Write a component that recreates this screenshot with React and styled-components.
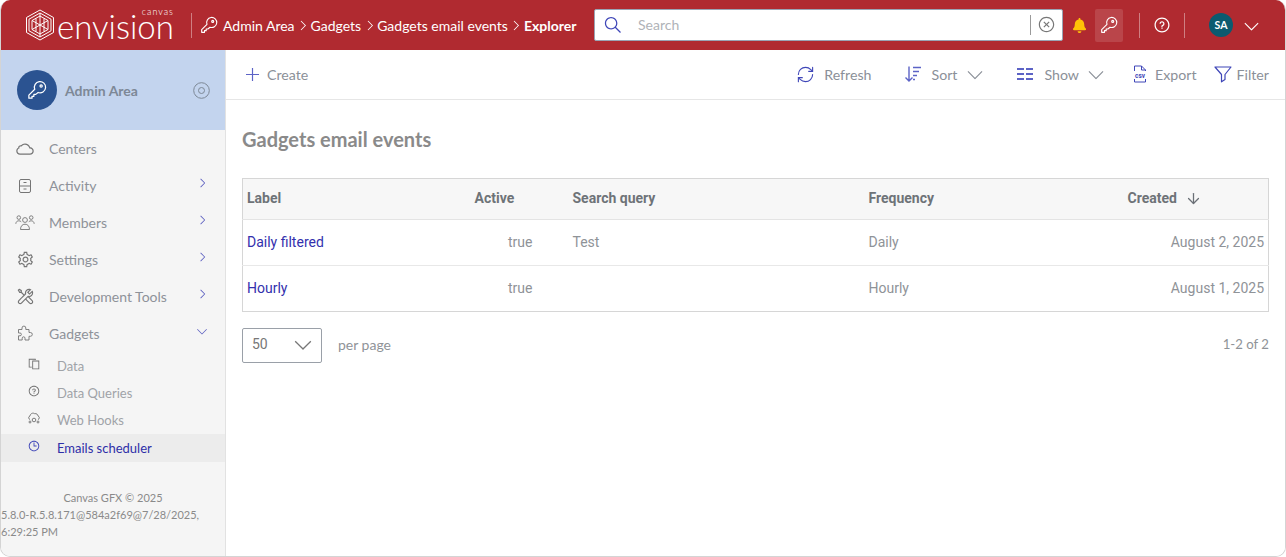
import React from "react";
import styled, { createGlobalStyle } from "styled-components";
import { RefreshCw, ArrowDown } from "lucide-react";
import {
  LiaCloudSolid,
  LiaCogSolid,
  LiaToolsSolid,
  LiaCopySolid,
  LiaQuestionCircleSolid,
  LiaClockSolid,
  LiaSearchSolid,
  LiaTimesCircleSolid,
  LiaPlusSolid,
  LiaAngleDownSolid,
  LiaAngleRightSolid,
} from "react-icons/lia";
import { FaBell } from "react-icons/fa";

const GlobalStyle = createGlobalStyle`
  html, body { margin: 0; padding: 0; background: #fff; }
  body { font-family: "Lato", "Liberation Sans", sans-serif; }
  * { box-sizing: border-box; }
`;

const Shell = styled.div`
  width: 1286px;
  height: 557px;
  display: flex;
  flex-direction: column;
  overflow: hidden;
  border-radius: 10px;
  border: 1px solid #d4d4d4;
  border-top: 0;
`;

const Header = styled.header`
  height: 50px;
  flex: none;
  margin: 0 -1px;
  background: #b02a30;
  display: flex;
  align-items: center;
  padding-left: 25px;
  color: #fff;
`;

const Logo = styled.div`
  display: flex;
  align-items: center;
  width: 166px;
  flex: none;
`;

const LogoWords = styled.div`
  position: relative;
  margin-left: 2px;
  margin-top: 1px;
  font-size: 33px;
  font-weight: 300;
  line-height: 34px;
`;

const LogoSmall = styled.span`
  position: absolute;
  right: 0;
  top: -2px;
  font-size: 9px;
  letter-spacing: 1px;
  line-height: 10px;
`;

const HeadDivider = styled.span`
  width: 1px;
  height: 25px;
  flex: none;
  background: rgba(255, 255, 255, 0.4);
  margin: ${(p) => p.$margin || "0"};
`;

const Crumbs = styled.nav`
  display: flex;
  align-items: center;
  font-size: 14px;
  width: 402px;
  flex: none;
  padding-left: 8px;
  white-space: nowrap;
  svg { flex: none; }
`;

const Crumb = styled.span`
  font-weight: ${(p) => (p.$current ? 700 : 400)};
  margin-left: ${(p) => p.$ml || 0}px;
`;

const CrumbArrow = styled.span`
  display: flex;
  margin: 0 1.5px;
`;

const SearchBox = styled.div`
  width: 469px;
  height: 32px;
  margin-bottom: 1px;
  flex: none;
  background: #fff;
  border: 1px solid #9aa4b4;
  border-radius: 2px;
  display: flex;
  align-items: center;
  padding: 0 6px 0 8px;
  color: #3f46b8;
`;

const SearchGlyph = styled.span`
  display: flex;
  transform: scaleX(-1);
`;

const SearchText = styled.span`
  flex: 1;
  margin-left: 15px;
  color: #b0b3b8;
  font-size: 14px;
`;

const SearchSep = styled.span`
  width: 1px;
  height: 20px;
  background: #9a9a9a;
  margin-right: 6px;
`;

const HeadIcon = styled.span`
  display: flex;
  align-items: center;
  justify-content: center;
  flex: none;
  width: ${(p) => p.$w}px;
  height: 33px;
  margin-left: ${(p) => p.$ml || 0}px;
  border-radius: 2px;
  color: ${(p) => p.$color || "#fff"};
  background: ${(p) => (p.$active ? "rgba(255,255,255,0.13)" : "transparent")};
`;

const Avatar = styled.span`
  width: 24px;
  height: 24px;
  flex: none;
  margin-left: 24px;
  border-radius: 50%;
  background: #0b5a6f;
  color: #fff;
  font-size: 10.5px;
  font-weight: 700;
  display: flex;
  align-items: center;
  justify-content: center;
`;

const Body = styled.div`
  flex: 1;
  display: flex;
  min-height: 0;
`;

const Sidebar = styled.aside`
  width: 225px;
  flex: none;
  background: #f5f5f5;
  border-right: 1px solid #e2e2e2;
  display: flex;
  flex-direction: column;
`;

const AdminBlock = styled.div`
  height: 80px;
  flex: none;
  background: #c3d4ee;
  display: flex;
  align-items: center;
  padding: 0 15px 0 16px;
`;

const AdminCircle = styled.span`
  width: 40px;
  height: 40px;
  border-radius: 50%;
  background: #2b5391;
  color: #fff;
  display: flex;
  align-items: center;
  justify-content: center;
`;

const AdminName = styled.span`
  flex: 1;
  margin-left: 8px;
  font-size: 14px;
  font-weight: 700;
  color: #7d8896;
`;

const NavList = styled.nav`
  display: flex;
  flex-direction: column;
`;

const NavRow = styled.div`
  height: 37px;
  flex: none;
  display: flex;
  align-items: center;
  padding-left: 14px;
  color: #757575;
`;

const NavIcon = styled.span`
  width: 20px;
  display: flex;
  justify-content: center;
  flex: none;
`;

const NavLabel = styled.span`
  flex: 1;
  margin-left: 14px;
  font-size: 14px;
  color: #8e9299;
`;

const NavCaret = styled.span`
  display: flex;
  width: 14px;
  margin-right: 15px;
  margin-top: -6px;
  color: #5c5fc0;
`;

const SubRow = styled.div`
  height: 27.4px;
  flex: none;
  display: flex;
  align-items: center;
  padding-left: 25px;
  font-size: 13px;
  color: ${(p) => (p.$active ? "#3f46b8" : "#6f6f6f")};
  background: ${(p) => (p.$active ? "#ececec" : "transparent")};
`;

const SubIcon = styled.span`
  width: 16px;
  display: flex;
  justify-content: center;
  flex: none;
  margin-top: -4px;
`;

const SubLabel = styled.span`
  margin-left: 15px;
  color: ${(p) => (p.$active ? "#2e2fa8" : "#a0a3a8")};
`;

const Footer = styled.footer`
  margin-top: 27px;
  font-size: 11px;
  line-height: 17px;
  color: #8a8a8a;
`;

const FooterCentered = styled.div`
  text-align: center;
`;

const Main = styled.main`
  flex: 1;
  display: flex;
  flex-direction: column;
  min-width: 0;
  background: #fff;
`;

const Toolbar = styled.div`
  height: 50px;
  flex: none;
  border-bottom: 1px solid #e6e6e6;
  display: flex;
  align-items: center;
  padding: 0 16px 1px 17px;
`;

const ToolButton = styled.span`
  display: flex;
  align-items: center;
  gap: ${(p) => p.$gap || 7}px;
  margin-left: ${(p) => p.$ml || 0}px;
  font-size: 14.2px;
  color: #8b9098;
  svg { flex: none; }
`;

const ToolChevron = styled.span`
  display: flex;
  margin-left: ${(p) => p.$ml || 0}px;
  color: #8b9098;
`;

const Spacer = styled.span`
  flex: 1;
`;

const ToolIcon = styled.span`
  display: flex;
  color: ${(p) => p.$color || "#5c63c6"};
`;

const Content = styled.section`
  padding: 0 16px;
`;

const Title = styled.h1`
  margin: 27px 0;
  height: 24px;
  line-height: 24px;
  font-size: 20px;
  font-weight: 700;
  color: #8a8a8a;
`;

const Table = styled.table`
  width: 1026px;
  border-collapse: collapse;
  table-layout: fixed;
  border: 1px solid #d6d6d6;
  font-family: "Roboto", "Liberation Sans", sans-serif;
  font-size: 14px;
`;

const HeadCell = styled.th`
  height: 41px;
  padding: 0 4px 2px;
  text-align: left;
  background: #f7f7f7;
  border-bottom: 1px solid #e4e4e4;
  color: #6e7378;
  font-weight: 700;
`;

const SortMark = styled.span`
  display: inline-flex;
  vertical-align: -4px;
  margin-left: 8px;
  color: #6a6f76;
`;

const Cell = styled.td`
  height: 46px;
  padding: 0 ${(p) => p.$pr || 4}px 2px 4px;
  text-align: ${(p) => p.$align || "left"};
  border-bottom: 1px solid #e8e8e8;
  color: #8f9398;
  tr:last-child & { border-bottom: 0; }
`;

const RowLink = styled.a`
  color: #3330ad;
  text-decoration: none;
`;

const Pager = styled.div`
  margin-top: 16px;
  display: flex;
  align-items: center;
  font-size: 14px;
  color: #8f9398;
`;

const PageSelect = styled.div`
  width: 80px;
  height: 35px;
  border: 1px solid #9aa0a8;
  border-radius: 2px;
  display: flex;
  align-items: center;
  justify-content: space-between;
  padding: 0 8px 3px 9px;
  font-family: "Roboto", "Liberation Sans", sans-serif;
  font-size: 14px;
  color: #777;
  margin-right: 16px;
`;

const PagerText = styled.span`
  margin-top: -3px;
`;

const PageCount = styled.span`
  margin: -3px 0 0 auto;
  font-size: 13.2px;
`;

const Hexagon = () => (
  <svg width="30" height="32" viewBox="0 0 30 32" fill="none" stroke="#fff" strokeWidth="1">
    <path d="M15 1 28.5 8.5V23.5L15 31 1.5 23.5V8.5Z" />
    <path d="M15 4 26 10.2V21.8L15 28 4 21.8V10.2Z" />
    <path d="M15 7 23 11.5V20.5L15 25 7 20.5V11.5Z" />
    <path d="M7 11.5 23 20.5M23 11.5 7 20.5M15 4V28M11 9.5V22.5M19 9.5V22.5" />
  </svg>
);

const KeyIcon = ({ size = 18, width = 1 }) => (
  <svg width={size} height={size} viewBox="0 0 16 16" fill="none" stroke="currentColor" strokeWidth={width} strokeLinejoin="round">
    <path d="M6.2 7.4A4.5 4.5 0 1 1 8.9 10L7 11.5H5.5V13H4V14.5H1.5V12.1Z" />
    <circle cx="11.3" cy="4.8" r="0.9" />
  </svg>
);

const DotRing = () => (
  <svg width="17" height="17" viewBox="0 0 17 17" fill="none" stroke="#7d8896" strokeWidth="1">
    <circle cx="8.5" cy="8.5" r="7.8" />
    <circle cx="8.5" cy="8.5" r="3" />
  </svg>
);

const Cabinet = () => (
  <svg width="16" height="16" viewBox="0 0 16 16" fill="none" stroke="currentColor" strokeWidth="1">
    <rect x="2.5" y="1.5" width="11" height="13" rx="1.5" />
    <path d="M2.5 8H13.5M6.5 4.5H9.5M6.5 11H9.5" />
  </svg>
);

const People = () => (
  <svg width="20" height="17" viewBox="0 0 20 17" fill="none" stroke="currentColor" strokeWidth="0.9">
    <circle cx="10" cy="6" r="2.4" />
    <path d="M5.5 15.5C5.5 12 7.5 10.2 10 10.2S14.5 12 14.5 15.5Z" />
    <circle cx="3.8" cy="3.6" r="1.8" />
    <circle cx="16.2" cy="3.6" r="1.8" />
    <path d="M.8 9.8C1 7.8 2.2 6.8 3.8 6.8 4.8 6.8 5.6 7.1 6.2 7.8M19.2 9.8C19 7.8 17.8 6.8 16.2 6.8 15.2 6.8 14.4 7.1 13.8 7.8" />
  </svg>
);

const Puzzle = () => (
  <svg width="17" height="17" viewBox="0 0 17 17" fill="none" stroke="currentColor" strokeWidth="0.9" strokeLinejoin="round">
    <path d="M5 4.5V3A1.9 1.9 0 0 1 8.8 3V4.5H12V7.5H13.4A1.9 1.9 0 0 1 13.4 11.3H12V15H8V13.2A1.4 1.4 0 0 0 5.2 13.2V15H1.5V10.8H3A1.4 1.4 0 0 0 3 8H1.5V4.5Z" />
  </svg>
);

const CloudGear = () => (
  <svg width="14" height="14" viewBox="0 0 14 14" fill="none" stroke="currentColor" strokeWidth="0.9">
    <path d="M3 8.5C1.2 8 1.2 5.5 3 5 3.3 2.5 6 1.4 7.6 2.7 9.5 2.2 11 3.6 11 5 12.8 5.5 12.8 8 11 8.5" />
    <circle cx="7" cy="9" r="1.8" />
    <circle cx="3" cy="11" r="1" />
    <circle cx="11" cy="11" r="1" />
  </svg>
);

const SortLines = () => (
  <svg width="18" height="18" viewBox="0 0 18 18" fill="none" stroke="currentColor" strokeWidth="1.4">
    <path d="M5 1.5V16M1.5 12.5 5 16 8.5 12.5" />
    <path d="M9 2.5H17M9 6.5H15M9 10.5H13M9 14.5H11" />
  </svg>
);

const ShowGrid = () => (
  <svg width="16" height="14" viewBox="0 0 16 14" fill="none" stroke="currentColor" strokeWidth="2">
    <path d="M0 2H7M9 2H16M0 7H7M9 7H16M0 12H7M9 12H16" />
  </svg>
);

const CsvFile = () => (
  <svg width="14" height="18" viewBox="0 0 14 18" fill="none" stroke="currentColor" strokeWidth="1">
    <path d="M1.5 6V1H8.5L12.5 5V6M8.5 1V5H12.5M1.5 14V17H12.5V14" />
    <text x="7" y="12.6" textAnchor="middle" fontFamily="Roboto, sans-serif" fontSize="6.4" fontWeight="700" fill="currentColor" stroke="none">csv</text>
  </svg>
);

const Funnel = () => (
  <svg width="18" height="18" viewBox="0 0 18 18" fill="none" stroke="currentColor" strokeWidth="1.2" strokeLinejoin="round">
    <path d="M1 2H17L11 9.5V14.5L7.5 16.8V9.5Z" />
  </svg>
);

const navItems = [
  { label: "Centers", icon: <LiaCloudSolid size={20} /> },
  { label: "Activity", icon: <Cabinet />, caret: "right" },
  { label: "Members", icon: <People />, caret: "right" },
  { label: "Settings", icon: <LiaCogSolid size={19} />, caret: "right" },
  { label: "Development Tools", icon: <LiaToolsSolid size={19} />, caret: "right" },
  { label: "Gadgets", icon: <Puzzle />, caret: "down" },
];

const subItems = [
  { label: "Data", icon: <LiaCopySolid size={14} /> },
  { label: "Data Queries", icon: <LiaQuestionCircleSolid size={14} /> },
  { label: "Web Hooks", icon: <CloudGear /> },
  { label: "Emails scheduler", icon: <LiaClockSolid size={14} />, active: true },
];

const rows = [
  { label: "Daily filtered", query: "Test", frequency: "Daily", created: "August 2, 2025" },
  { label: "Hourly", query: "", frequency: "Hourly", created: "August 1, 2025" },
];

export default function App() {
  return (
    <Shell>
      <GlobalStyle />
      <Header>
        <Logo>
          <Hexagon />
          <LogoWords>
            envision
            <LogoSmall>canvas</LogoSmall>
          </LogoWords>
        </Logo>
        <HeadDivider />
        <Crumbs>
          <KeyIcon size={18} />
          <Crumb $ml={5}>Admin Area</Crumb>
          <CrumbArrow><LiaAngleRightSolid size={13} /></CrumbArrow>
          <Crumb>Gadgets</Crumb>
          <CrumbArrow><LiaAngleRightSolid size={13} /></CrumbArrow>
          <Crumb>Gadgets email events</Crumb>
          <CrumbArrow><LiaAngleRightSolid size={13} /></CrumbArrow>
          <Crumb $current>Explorer</Crumb>
        </Crumbs>
        <SearchBox>
          <SearchGlyph><LiaSearchSolid size={20} /></SearchGlyph>
          <SearchText>Search</SearchText>
          <SearchSep />
          <LiaTimesCircleSolid size={19} color="#777" />
        </SearchBox>
        <HeadIcon $w={32} $color="#ffc107">
          <FaBell size={15} />
        </HeadIcon>
        <HeadIcon $w={28} $active>
          <KeyIcon size={18} />
        </HeadIcon>
        <HeadDivider $margin="0 0 0 16px" />
        <HeadIcon $w={44}>
          <LiaQuestionCircleSolid size={20} />
        </HeadIcon>
        <HeadDivider />
        <Avatar>SA</Avatar>
        <HeadIcon $w={20} $ml={8}>
          <LiaAngleDownSolid size={17} />
        </HeadIcon>
      </Header>
      <Body>
        <Sidebar>
          <AdminBlock>
            <AdminCircle>
              <KeyIcon size={20} />
            </AdminCircle>
            <AdminName>Admin Area</AdminName>
            <DotRing />
          </AdminBlock>
          <NavList>
            {navItems.map((item) => (
              <NavRow key={item.label}>
                <NavIcon>{item.icon}</NavIcon>
                <NavLabel>{item.label}</NavLabel>
                {item.caret && (
                  <NavCaret>
                    {item.caret === "down" ? <LiaAngleDownSolid size={12} /> : <LiaAngleRightSolid size={12} />}
                  </NavCaret>
                )}
              </NavRow>
            ))}
            {subItems.map((item) => (
              <SubRow key={item.label} $active={item.active}>
                <SubIcon>{item.icon}</SubIcon>
                <SubLabel $active={item.active}>{item.label}</SubLabel>
              </SubRow>
            ))}
          </NavList>
          <Footer>
            <FooterCentered>Canvas GFX © 2025</FooterCentered>
            5.8.0-R.5.8.171@584a2f69@7/28/2025, 6:29:25 PM
          </Footer>
        </Sidebar>
        <Main>
          <Toolbar>
            <ToolButton $gap={5}>
              <ToolIcon><LiaPlusSolid size={19} /></ToolIcon>
              Create
            </ToolButton>
            <Spacer />
            <ToolButton $gap={9}>
              <ToolIcon $color="#3f46b8"><RefreshCw size={19} strokeWidth={1.4} /></ToolIcon>
              Refresh
            </ToolButton>
            <ToolButton $ml={33} $gap={9}>
              <ToolIcon><SortLines /></ToolIcon>
              Sort
              <ToolChevron><LiaAngleDownSolid size={18} /></ToolChevron>
            </ToolButton>
            <ToolButton $ml={33} $gap={11}>
              <ToolIcon><ShowGrid /></ToolIcon>
              Show
              <ToolChevron $ml={-3}><LiaAngleDownSolid size={18} /></ToolChevron>
            </ToolButton>
            <ToolButton $ml={28} $gap={8}>
              <ToolIcon $color="#3f46b8"><CsvFile /></ToolIcon>
              Export
            </ToolButton>
            <ToolButton $ml={17} $gap={5}>
              <ToolIcon $color="#3f46b8"><Funnel /></ToolIcon>
              Filter
            </ToolButton>
          </Toolbar>
          <Content>
            <Title>Gadgets email events</Title>
            <Table>
              <colgroup>
                <col style={{ width: 228 }} />
                <col style={{ width: 98 }} />
                <col style={{ width: 296 }} />
                <col style={{ width: 259 }} />
                <col style={{ width: 145 }} />
              </colgroup>
              <thead>
                <tr>
                  <HeadCell>Label</HeadCell>
                  <HeadCell>Active</HeadCell>
                  <HeadCell>Search query</HeadCell>
                  <HeadCell>Frequency</HeadCell>
                  <HeadCell>
                    Created
                    <SortMark><ArrowDown size={17} strokeWidth={1.8} /></SortMark>
                  </HeadCell>
                </tr>
              </thead>
              <tbody>
                {rows.map((row) => (
                  <tr key={row.label}>
                    <Cell><RowLink href="#">{row.label}</RowLink></Cell>
                    <Cell $align="right" $pr={36}>true</Cell>
                    <Cell>{row.query}</Cell>
                    <Cell>{row.frequency}</Cell>
                    <Cell $align="right">{row.created}</Cell>
                  </tr>
                ))}
              </tbody>
            </Table>
            <Pager>
              <PageSelect>
                50
                <LiaAngleDownSolid size={20} />
              </PageSelect>
              <PagerText>per page</PagerText>
              <PageCount>1-2 of 2</PageCount>
            </Pager>
          </Content>
        </Main>
      </Body>
    </Shell>
  );
}
